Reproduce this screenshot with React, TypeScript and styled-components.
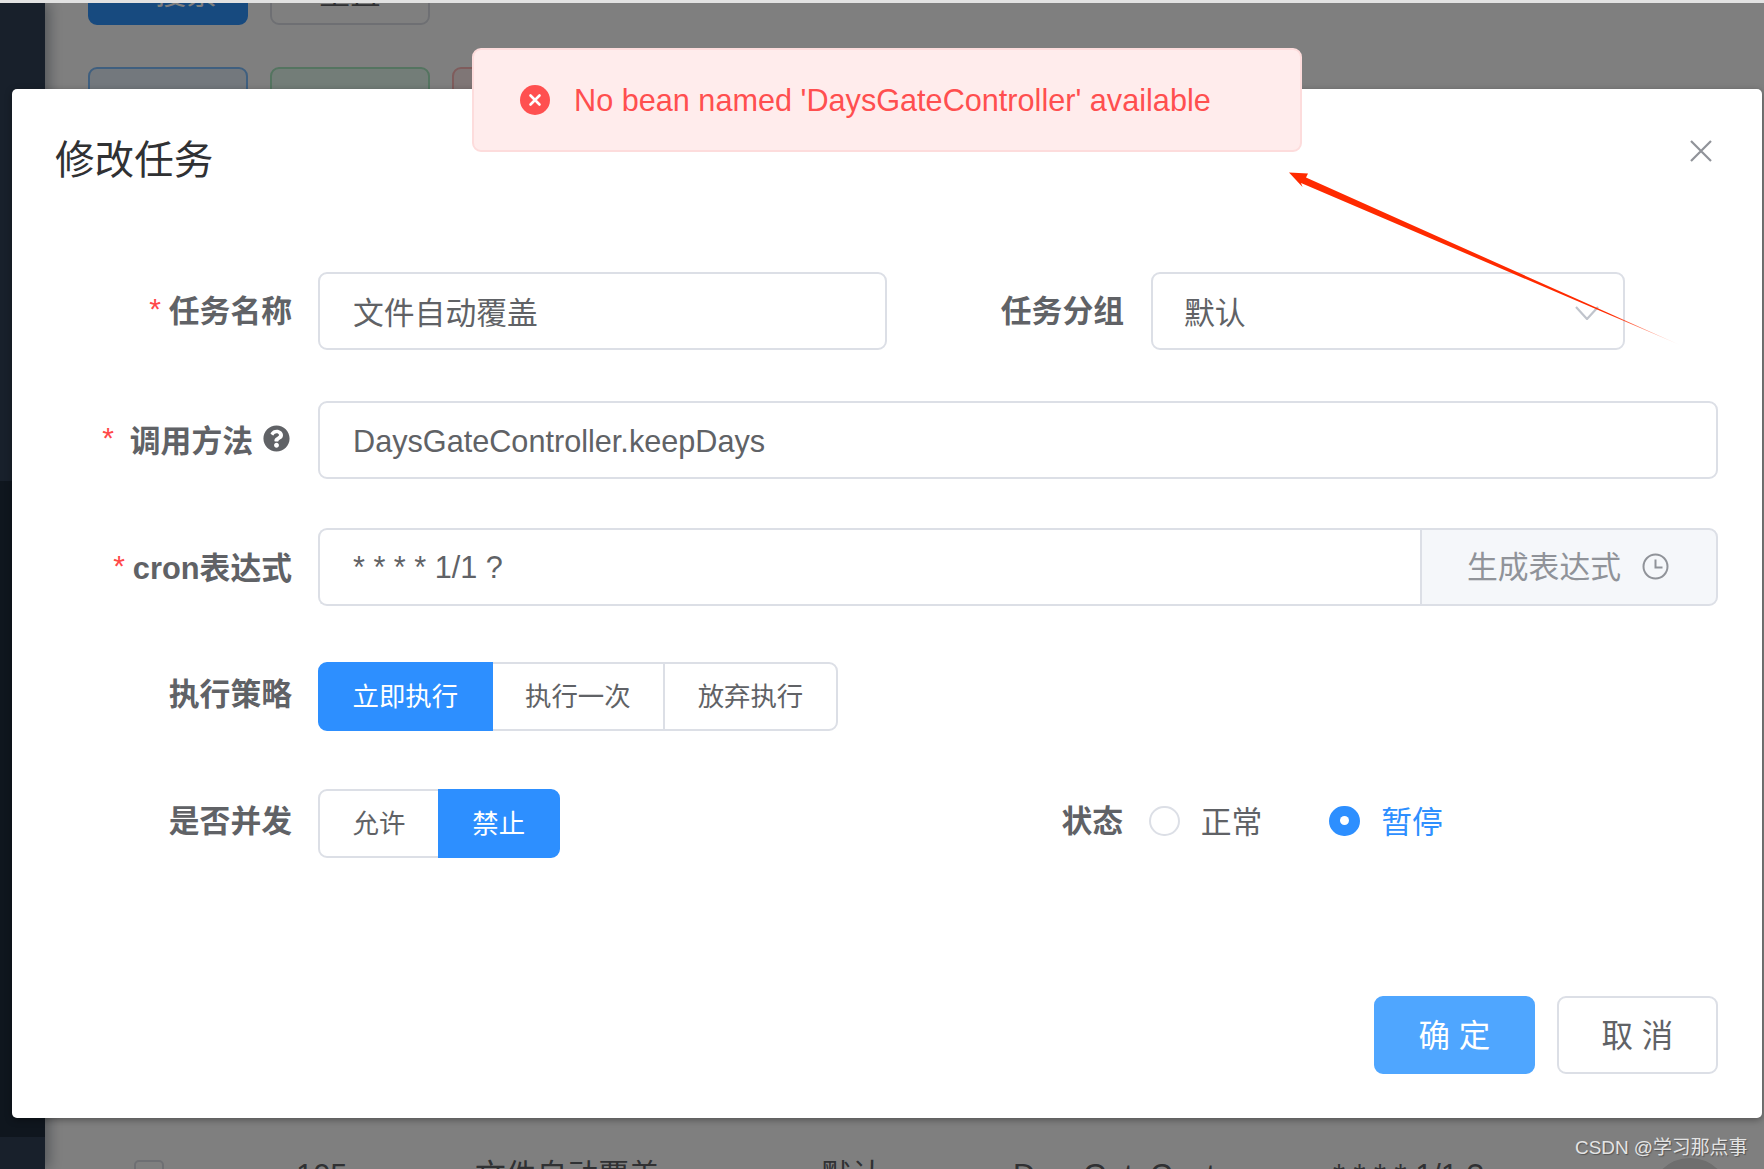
import React from 'react';
import styled, { createGlobalStyle } from 'styled-components';
import { FaQuestionCircle } from 'react-icons/fa';
import { Search, Plus, Pencil, Trash2 } from 'lucide-react';

const Global = createGlobalStyle`
  html, body { margin: 0; padding: 0; background: #fff; overflow: hidden; }
  * { box-sizing: border-box; }
`;

const FONT = `"Liberation Sans", Arial, "Noto Sans CJK SC", sans-serif`;

const Page = styled.div`
  position: relative;
  width: 1764px;
  height: 1169px;
  overflow: hidden;
  display: flex;
  flex-direction: column;
  font-family: ${FONT};
  color: #606266;
`;

const TopEdge = styled.div`
  flex: none;
  height: 3px;
  background: #e2e2e2;
  position: relative;
  z-index: 2;
`;

const Workspace = styled.div`
  flex: 1;
  min-height: 0;
  display: flex;
`;

const Sidebar = styled.aside`
  flex: none;
  width: 45px;
  display: flex;
  flex-direction: column;
  box-shadow: 4px 0 13px rgba(0, 21, 41, 0.35);
  position: relative;
  z-index: 1;
`;

const SideBlock = styled.div<{ $h: number; $dark?: boolean }>`
  flex: ${(p) => (p.$h ? `none` : 1)};
  height: ${(p) => (p.$h ? `${p.$h}px` : 'auto')};
  background: ${(p) => (p.$dark ? '#1f2d3d' : '#304156')};
`;

const Main = styled.main`
  flex: 1;
  min-width: 0;
  background: #fff;
  display: flex;
  flex-direction: column;
`;

const ToolRow = styled.div<{ $first?: boolean }>`
  display: flex;
  gap: 22px;
  padding-left: 43px;
  margin-top: ${(p) => (p.$first ? '-48px' : '42px')};
`;

const tones = {
  solid: { bg: '#2f94ff', border: '#2f94ff', fg: '#ffffff' },
  plain: { bg: '#ffffff', border: '#dcdfe6', fg: '#606266' },
  blue: { bg: '#e6f0fb', border: '#7fbfff', fg: '#1890ff' },
  green: { bg: '#e7faf0', border: '#a8e8c0', fg: '#13ce66' },
  red: { bg: '#ffeded', border: '#ffb8b8', fg: '#ff4949' },
};

const ToolButton = styled.div<{ $tone: keyof typeof tones }>`
  width: 160px;
  height: 70px;
  display: flex;
  align-items: center;
  justify-content: center;
  gap: 8px;
  font-size: 30.8px;
  border-radius: 9px;
  border: 2px solid ${(p) => tones[p.$tone].border};
  background: ${(p) => tones[p.$tone].bg};
  color: ${(p) => tones[p.$tone].fg};
`;

const TableRow = styled.div`
  margin-top: auto;
  margin-bottom: -43px;
  height: 52px;
  display: grid;
  grid-template-columns: 162px 179px 346px 192px 320px 1fr;
  padding-left: 89px;
  align-items: start;
  font-size: 30.8px;
  line-height: 32px;
  white-space: nowrap;
`;

const TableCheck = styled.div`
  width: 30px;
  height: 30px;
  border: 2px solid #dcdfe6;
  border-radius: 5px;
  background: #fff;
`;

const EllipsisCell = styled.span`
  max-width: 240px;
  overflow: hidden;
  text-overflow: ellipsis;
`;

const FloatBall = styled.div`
  position: absolute;
  left: 1650px;
  top: 1158px;
  width: 80px;
  height: 80px;
  border-radius: 50%;
  border: 15px solid #dcdcdc;
  background: #fff;
`;

const Backdrop = styled.div`
  position: absolute;
  inset: 3px 0 0 0;
  background: rgba(0, 0, 0, 0.5);
  z-index: 3;
`;

const Watermark = styled.div`
  position: absolute;
  left: 1575px;
  top: 1136px;
  font-size: 18.9px;
  line-height: 24px;
  color: #e4e4e4;
  text-shadow: 1px 1px 1px #555;
  white-space: nowrap;
  z-index: 4;
`;

const Dialog = styled.section`
  position: absolute;
  left: 12px;
  top: 89px;
  width: 1750px;
  height: 1029px;
  background: #fff;
  border-radius: 5px;
  box-shadow: 0 2px 7px rgba(0, 0, 0, 0.35);
  display: flex;
  flex-direction: column;
  z-index: 4;
`;

const DialogHeader = styled.header`
  flex: none;
  height: 183px;
  padding: 44px 50px 0 43px;
  display: flex;
  justify-content: space-between;
  align-items: flex-start;
`;

const DialogTitle = styled.h2`
  margin: 0;
  font-size: 39.6px;
  line-height: 54px;
  font-weight: 400;
  color: #303133;
`;

const CloseIcon = styled.svg`
  width: 22px;
  height: 22px;
  margin-top: 7px;
  stroke: #909399;
  stroke-width: 2.2;
  fill: none;
`;

const Form = styled.div`
  padding: 0 44px;
  display: flex;
  flex-direction: column;
`;

const FormRow = styled.div<{ $top?: number }>`
  height: 78px;
  margin-top: ${(p) => p.$top ?? 0}px;
  display: flex;
  align-items: center;
`;

const Col = styled.div`
  width: 831px;
  display: flex;
  align-items: center;
`;

const FieldLabel = styled.label<{ $lift: number; $right?: number }>`
  flex: none;
  width: 262px;
  padding-right: ${(p) => p.$right ?? 26}px;
  padding-bottom: ${(p) => p.$lift}px;
  display: flex;
  justify-content: flex-end;
  align-items: center;
  font-size: 30.8px;
  font-weight: 700;
  color: #606266;
  white-space: nowrap;
`;

const Star = styled.span<{ $gap: number }>`
  color: #ff4949;
  font-weight: 400;
  font-size: 30px;
  margin-right: ${(p) => p.$gap}px;
`;

const HelpIcon = styled(FaQuestionCircle)`
  width: 27px;
  height: 27px;
  margin-left: 10px;
  color: #606266;
`;

const InputBox = styled.div<{ $w?: number; $cjk?: boolean }>`
  position: relative;
  flex: ${(p) => (p.$w ? 'none' : 1)};
  width: ${(p) => (p.$w ? `${p.$w}px` : 'auto')};
  margin-left: ${(p) => (p.$w ? '2px' : '0')};
  min-width: 0;
  height: 78px;
  display: flex;
  align-items: center;
  padding: ${(p) => (p.$w ? '0 31px 2px' : p.$cjk ? '0 33px 2px' : '2px 33px 0')};
  border: 2px solid #dcdfe6;
  border-radius: 9px;
  background: #fff;
  font-size: ${(p) => (p.$cjk ? '30.8px' : '30.65px')};
  color: #606266;
  white-space: nowrap;
`;

const AppendInput = styled(InputBox)`
  border-radius: 9px 0 0 9px;
  border-right: none;
  padding-top: 0;
`;

const Append = styled.div`
  flex: none;
  width: 298px;
  height: 78px;
  display: flex;
  align-items: center;
  justify-content: flex-start;
  gap: 21px;
  padding: 0 0 2px 45px;
  background: #f5f7fa;
  color: #909399;
  border: 2px solid #dcdfe6;
  border-radius: 0 9px 9px 0;
  font-size: 30.8px;
  white-space: nowrap;
`;

const AppendText = styled.span`
  padding-bottom: 4px;
`;

const SmallIcon = styled.svg`
  width: 27px;
  height: 27px;
  stroke: #909399;
  stroke-width: 2;
  fill: none;
`;

const Chevron = styled.svg`
  position: absolute;
  right: 24px;
  top: 32px;
  width: 24px;
  height: 14px;
  stroke: #c0c4cc;
  stroke-width: 2.2;
  fill: none;
`;

const ButtonGroup = styled.div`
  display: flex;
  height: 69px;
`;

const GroupButton = styled.div<{ $active?: boolean }>`
  height: 69px;
  padding: 0 32.5px 4px;
  margin-left: -2px;
  display: flex;
  align-items: center;
  font-size: 26.4px;
  white-space: nowrap;
  border: 2px solid ${(p) => (p.$active ? '#2d8fff' : '#dcdfe6')};
  background: ${(p) => (p.$active ? '#2d8fff' : '#fff')};
  color: ${(p) => (p.$active ? '#fff' : '#606266')};
  position: relative;
  z-index: ${(p) => (p.$active ? 1 : 0)};
  &:first-child {
    margin-left: 0;
    border-radius: 9px 0 0 9px;
  }
  &:last-child {
    border-radius: 0 9px 9px 0;
  }
`;

const RadioGroup = styled.div`
  display: flex;
  align-items: center;
  gap: 67px;
  padding-bottom: 5px;
`;

const RadioItem = styled.div<{ $active?: boolean }>`
  display: flex;
  align-items: center;
  gap: 21px;
  font-size: 30.8px;
  color: ${(p) => (p.$active ? '#2d8fff' : '#606266')};
`;

const RadioText = styled.span`
  padding-bottom: 4px;
`;

const RadioDot = styled.span<{ $active?: boolean }>`
  width: 30.8px;
  height: 30.8px;
  border-radius: 50%;
  display: flex;
  align-items: center;
  justify-content: center;
  background: ${(p) => (p.$active ? '#2d8fff' : '#fff')};
  border: 2px solid ${(p) => (p.$active ? '#2d8fff' : '#dcdfe6')};
  &::after {
    content: '';
    width: 9px;
    height: 9px;
    border-radius: 50%;
    background: ${(p) => (p.$active ? '#fff' : 'transparent')};
  }
`;

const Footer = styled.footer`
  margin-top: auto;
  padding: 0 44px 44px;
  display: flex;
  justify-content: flex-end;
  gap: 22px;
`;

const FooterButton = styled.div<{ $primary?: boolean }>`
  width: 161px;
  height: 78px;
  padding-bottom: 4px;
  display: flex;
  align-items: center;
  justify-content: center;
  font-size: 31.5px;
  white-space: pre;
  border-radius: 9px;
  border: 2px solid ${(p) => (p.$primary ? '#4fa6ff' : '#dcdfe6')};
  background: ${(p) => (p.$primary ? '#4fa6ff' : '#fff')};
  color: ${(p) => (p.$primary ? '#fff' : '#606266')};
`;

const Toast = styled.div`
  position: absolute;
  left: 472px;
  top: 48px;
  width: 830px;
  height: 104px;
  padding: 0 0 0 46px;
  display: flex;
  align-items: center;
  gap: 24px;
  background: #ffecec;
  border: 2px solid #fddcdc;
  border-radius: 9px;
  color: #ff4f4f;
  font-size: 30.65px;
  white-space: nowrap;
  z-index: 5;
`;

const ToastIcon = styled.svg`
  flex: none;
  width: 30px;
  height: 30px;
`;

const Annotation = styled.svg`
  position: absolute;
  left: 1280px;
  top: 165px;
  width: 410px;
  height: 190px;
  z-index: 6;
  pointer-events: none;
`;

export default function App() {
  return (
    <Page>
      <Global />
      <TopEdge />
      <Workspace>
        <Sidebar>
          <SideBlock $h={478} />
          <SideBlock $h={656} $dark />
          <SideBlock $h={0} />
        </Sidebar>
        <Main>
          <ToolRow $first>
            <ToolButton $tone="solid">
              <Search size={28} />
              搜索
            </ToolButton>
            <ToolButton $tone="plain">重置</ToolButton>
          </ToolRow>
          <ToolRow>
            <ToolButton $tone="blue">
              <Plus size={28} />
              新增
            </ToolButton>
            <ToolButton $tone="green">
              <Pencil size={28} />
              修改
            </ToolButton>
            <ToolButton $tone="red">
              <Trash2 size={28} />
              删除
            </ToolButton>
          </ToolRow>
          <TableRow>
            <TableCheck />
            <span>105</span>
            <span>文件自动覆盖</span>
            <span>默认</span>
            <EllipsisCell>DaysGateController.keepDays</EllipsisCell>
            <span>* * * * 1/1 ?</span>
          </TableRow>
        </Main>
      </Workspace>
      <FloatBall />
      <Backdrop />

      <Dialog>
        <DialogHeader>
          <DialogTitle>修改任务</DialogTitle>
          <CloseIcon viewBox="0 0 22 22">
            <path d="M1 1 L21 21 M21 1 L1 21" />
          </CloseIcon>
        </DialogHeader>

        <Form>
          <FormRow>
            <Col>
              <FieldLabel $lift={5}>
                <Star $gap={8}>*</Star>任务名称
              </FieldLabel>
              <InputBox $cjk>文件自动覆盖</InputBox>
            </Col>
            <Col>
              <FieldLabel $lift={5} $right={25}>
                任务分组
              </FieldLabel>
              <InputBox $w={474} $cjk>
                默认
                <Chevron viewBox="0 0 24 14">
                  <path d="M1 1 L12 13 L23 1" />
                </Chevron>
              </InputBox>
            </Col>
          </FormRow>

          <FormRow $top={51}>
            <FieldLabel $lift={4} $right={28}>
              <Star $gap={16}>*</Star>调用方法
              <HelpIcon />
            </FieldLabel>
            <InputBox>DaysGateController.keepDays</InputBox>
          </FormRow>

          <FormRow $top={49}>
            <FieldLabel $lift={3}>
              <Star $gap={8}>*</Star>cron表达式
            </FieldLabel>
            <AppendInput>* * * * 1/1 ?</AppendInput>
            <Append>
              <AppendText>生成表达式</AppendText>
              <SmallIcon viewBox="0 0 27 27">
                <circle cx="13.5" cy="13.5" r="12" />
                <path d="M13.5 6.5 V14.5 H20.5" />
              </SmallIcon>
            </Append>
          </FormRow>

          <FormRow $top={51}>
            <FieldLabel $lift={9}>执行策略</FieldLabel>
            <ButtonGroup>
              <GroupButton $active>立即执行</GroupButton>
              <GroupButton>执行一次</GroupButton>
              <GroupButton>放弃执行</GroupButton>
            </ButtonGroup>
          </FormRow>

          <FormRow $top={49.5}>
            <Col>
              <FieldLabel $lift={10}>是否并发</FieldLabel>
              <ButtonGroup>
                <GroupButton>允许</GroupButton>
                <GroupButton $active>禁止</GroupButton>
              </ButtonGroup>
            </Col>
            <Col>
              <FieldLabel $lift={10}>状态</FieldLabel>
              <RadioGroup>
                <RadioItem>
                  <RadioDot />
                  <RadioText>正常</RadioText>
                </RadioItem>
                <RadioItem $active>
                  <RadioDot $active />
                  <RadioText>暂停</RadioText>
                </RadioItem>
              </RadioGroup>
            </Col>
          </FormRow>
        </Form>

        <Footer>
          <FooterButton $primary>确 定</FooterButton>
          <FooterButton>取 消</FooterButton>
        </Footer>
      </Dialog>

      <Toast>
        <ToastIcon viewBox="0 0 30 30">
          <circle cx="15" cy="15" r="15" fill="#ff5050" />
          <path d="M10.5 10.5 L19.5 19.5 M19.5 10.5 L10.5 19.5" stroke="#fff" strokeWidth="2.6" strokeLinecap="round" />
        </ToastIcon>
        No bean named 'DaysGateController' available
      </Toast>

      <Annotation viewBox="1280 165 410 190">
        <defs>
          <linearGradient id="arrowFade" gradientUnits="userSpaceOnUse" x1="1289" y1="172" x2="1680" y2="345">
            <stop offset="0.82" stopColor="#ff2a00" />
            <stop offset="1" stopColor="#ff2a00" stopOpacity="0.1" />
          </linearGradient>
        </defs>
        <polygon
          points="1289,172.5 1308,173.5 1306,177.5 1680,345 1301,183 1302.5,187"
          fill="url(#arrowFade)"
        />
      </Annotation>

      <Watermark>CSDN @学习那点事</Watermark>
    </Page>
  );
}
